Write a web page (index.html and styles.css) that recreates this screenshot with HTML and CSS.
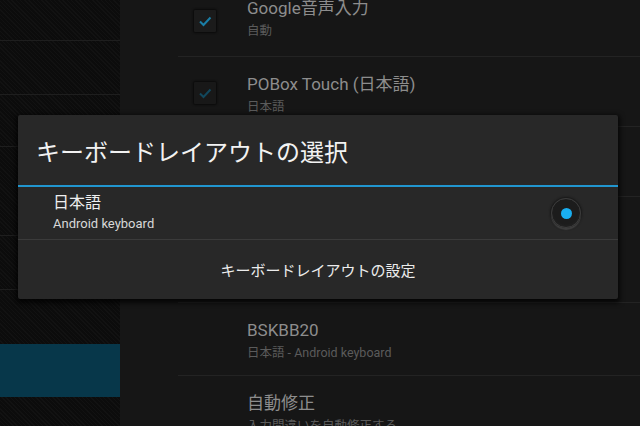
FILE: index.html
```html
<!DOCTYPE html>
<html lang="ja">
<head>
    <meta charset="utf-8"/>
    <meta content="width=device-width, initial-scale=1.0" name="viewport"/>
    <title>キーボードレイアウトの選択</title>
    <link rel="stylesheet" href="styles.css">
</head>
<body>
    <div class="screen">
        <div class="side">
            <div class="side-row" style="height: 41px;"></div>
            <div class="side-row" style="height: 54px;"></div>
            <div class="side-row" style="height: 52px;"></div>
            <div class="side-row" style="height: 89px;"></div>
            <div class="side-row" style="height: 54px;"></div>
            <div class="side-row plain" style="height: 54px;"></div>
            <div class="side-row selected" style="height: 53px;"></div>
        </div>
        <div class="main">
            <div class="list">
                <div class="item first">
                    <div class="check on"><svg viewBox="0 0 22 22" width="22" height="22"><path d="M6 11.5 L9.5 15 L16.5 7.5" fill="none" stroke="currentColor" stroke-width="2"/></svg></div>
                    <div class="text">
                        <div class="title">Google音声入力</div>
                        <div class="summary">自動</div>
                    </div>
                </div>
                <div class="item">
                    <div class="check dim"><svg viewBox="0 0 22 22" width="22" height="22"><path d="M6 11.5 L9.5 15 L16.5 7.5" fill="none" stroke="currentColor" stroke-width="2"/></svg></div>
                    <div class="text">
                        <div class="title">POBox Touch (日本語)</div>
                        <div class="summary">日本語</div>
                    </div>
                </div>
                <div class="item"></div>
                <div class="item tall"></div>
                <div class="item">
                    <div class="text">
                        <div class="title">BSKBB20</div>
                        <div class="summary">日本語 - Android keyboard</div>
                    </div>
                </div>
                <div class="item">
                    <div class="text">
                        <div class="title">自動修正</div>
                        <div class="summary">入力間違いを自動修正する</div>
                    </div>
                </div>
            </div>
        </div>

        <div class="dialog">
            <div class="dialog-title">キーボードレイアウトの選択</div>
            <div class="dialog-item">
                <div class="dialog-text">
                    <div class="lang">日本語</div>
                    <div class="layout">Android keyboard</div>
                </div>
                <div class="radio"><div class="dot"></div></div>
            </div>
            <div class="dialog-button">キーボードレイアウトの設定</div>
        </div>
    </div>
</body>
</html>
```

FILE: styles.css
```css
body {
    margin: 0;
    padding: 0;
    background-color: #141414;
    font-family: Roboto, "Noto Sans CJK JP", sans-serif;
}
.screen {
    width: 640px;
    height: 426px;
    display: flex;
    overflow: hidden;
    position: relative;
}
.side {
    width: 120px;
    flex-shrink: 0;
    display: flex;
    flex-direction: column;
    background-color: #0c0c0c;
    background-image: repeating-linear-gradient(45deg, rgba(255,255,255,0.025) 0 1px, transparent 1px 3px);
}
.side-row {
    border-bottom: 1px solid #1e1e1e;
    box-sizing: border-box;
}
.side-row.plain {
    border-bottom: none;
}
.side-row.selected {
    background-color: #07374a;
    border-bottom: none;
}
.main {
    flex: 1;
    background-color: #161616;
    padding-left: 58px;
}
.list {
    margin-top: -15px; /* list is scrolled */
}
.item {
    height: 72px;
    box-sizing: border-box;
    border-bottom: 1px solid #232323;
    display: flex;
    align-items: flex-start;
    padding-top: 16px;
}
.item.first {
    padding-top: 12px;
}
.item.first .check {
    margin-top: 13px;
}
.item:nth-child(2), .item:nth-child(3) {
    height: 70px;
}
.item.tall {
    height: 106px;
}
.item:nth-child(5) {
    height: 73px;
}
.check {
    width: 22px;
    height: 22px;
    margin-left: 16px;
    margin-top: 9px;
    background-color: #1b1b1b;
    border-radius: 1px;
    box-shadow: 0 0 2px 1px #0a0a0a;
    color: #1a7ea6;
}
.check.dim {
    color: #12485d;
    background-color: #181818;
}
.check svg {
    display: block;
}
.text {
    padding-left: 69px;
}
.item .check + .text {
    padding-left: 31px;
}
.title {
    font-size: 17px;
    line-height: 22px;
    color: #8d8d8d;
    white-space: nowrap;
}
.summary {
    font-size: 12.5px;
    line-height: 18px;
    margin-top: 3px;
    color: #5b5b5b;
    white-space: nowrap;
}
.dialog {
    position: absolute;
    left: 18px;
    top: 115px;
    width: 600px;
    background-color: #282828;
    border-radius: 2px;
    box-shadow: 0 2px 5px 2px rgba(0,0,0,0.75);
    display: flex;
    flex-direction: column;
}
.dialog-title {
    height: 70px;
    display: flex;
    align-items: center;
    padding-left: 18px;
    font-size: 24px;
    color: #f2f2f2;
    border-bottom: 2px solid #2196cf;
}
.dialog-item {
    height: 52px;
    display: flex;
    align-items: center;
    justify-content: space-between;
    padding: 0 37px 0 35px;
    border-bottom: 1px solid #3b3b3b;
}
.lang {
    font-size: 16px;
    line-height: 20px;
    color: #eeeeee;
}
.layout {
    font-size: 13px;
    line-height: 18px;
    margin-top: 2px;
    color: #d8d8d8;
}
.radio {
    width: 28px;
    height: 28px;
    border-radius: 50%;
    border: 1px solid #3c3c3c;
    background: radial-gradient(circle at 50% 45%, #1c1c1c 60%, #2c2c2c 100%);
    box-shadow: 0 2px 1px #3e3e3e, 0 0 2px 1px #171717;
    display: flex;
    align-items: center;
    justify-content: center;
}
.dot {
    width: 11px;
    height: 11px;
    border-radius: 50%;
    background-color: #19aef0;
}
.dialog-button {
    height: 59px;
    display: flex;
    align-items: center;
    justify-content: center;
    font-size: 15px;
    color: #ececec;
}
```
